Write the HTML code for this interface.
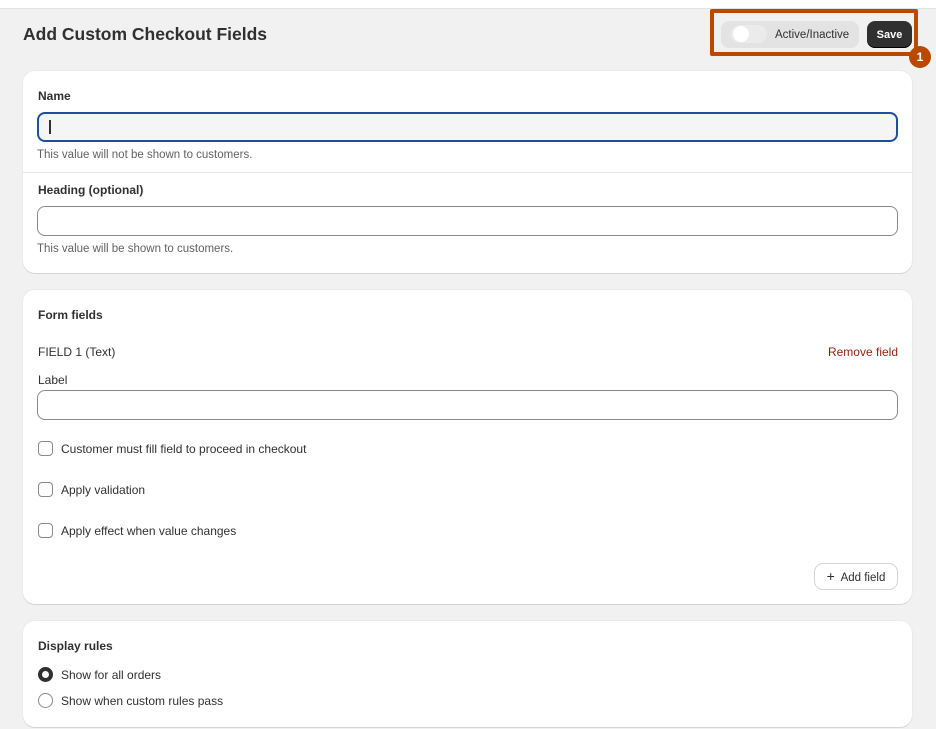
<!DOCTYPE html>
<html><head><meta charset="utf-8"><style>
*{box-sizing:border-box;margin:0;padding:0}
body{width:936px;height:729px;background:#f1f1f1;font-family:"Liberation Sans",sans-serif;color:#303030;position:relative;overflow:hidden;font-size:12px}
.a{position:absolute}
.top{left:0;top:0;width:936px;height:9px;background:#fff;border-bottom:1px solid #e3e3e3}
.card{position:absolute;left:23px;width:889px;background:#fff;border-radius:12px;box-shadow:0 1px 0 #d4d4d4,0 0 0 1px #ebebeb}
.b{font-weight:bold;font-size:12px}
.in{position:absolute;left:14px;width:861px;height:30px;border:1px solid #8a8a8a;border-radius:8px;background:#fff}
.help{position:absolute;left:14px;font-size:11.5px;color:#616161}
.cb{position:absolute;left:15px;width:15px;height:15px;border:1px solid #8a8a8a;border-radius:4px}
.lbl{position:absolute;left:38px;font-size:12px}
</style></head><body>
<div class="a top"></div>
<div class="a" style="left:23px;top:24px;font-size:17.5px;font-weight:bold;color:#303030">Add Custom Checkout Fields</div>
<div class="a" style="left:710px;top:9px;width:208px;height:47px;border:4px solid #b84a00;border-radius:2px"></div>
<div class="a" style="left:721px;top:21px;width:138px;height:27px;background:#e3e3e3;border-radius:8px"></div>
<div class="a" style="left:731px;top:25px;width:36px;height:18px;background:#ebebeb;border-radius:9px"></div>
<div class="a" style="left:733px;top:26px;width:16px;height:16px;background:#fff;border-radius:50%"></div>
<div class="a" style="left:775px;top:29px;font-size:11.5px;color:#303030">Active/Inactive</div>
<div class="a" style="left:867px;top:21px;width:45px;height:27px;background:#303030;border-radius:8px;color:#fff;font-weight:bold;font-size:11px;text-align:center;line-height:28px;box-shadow:inset 0 -1px 0 #000">Save</div>
<div class="a" style="left:909px;top:46px;width:22px;height:22px;border-radius:50%;background:#b84a00;color:#fff;font-weight:bold;font-size:12px;text-align:center;line-height:22px">1</div>

<div class="card" style="top:71px;height:202px">
<div class="a b" style="left:15px;top:18px">Name</div>
<div class="in" style="top:41px;border:2px solid #1d4fa0;background:#f5f5f5"><div class="a" style="left:10px;top:6px;width:2px;height:14px;background:#303030"></div></div>
<div class="help" style="top:78px">This value will not be shown to customers.</div>
<div class="a" style="left:0;top:101px;width:889px;height:1px;background:#e3e3e3"></div>
<div class="a b" style="left:15px;top:112px">Heading (optional)</div>
<div class="in" style="top:135px"></div>
<div class="help" style="top:172px">This value will be shown to customers.</div>
</div>

<div class="card" style="top:290px;height:314px">
<div class="a b" style="left:15px;top:18px">Form fields</div>
<div class="a" style="left:15px;top:55px;font-size:12px">FIELD 1 (Text)</div>
<div class="a" style="right:14px;top:55px;font-size:12px;color:#8e1f0b">Remove field</div>
<div class="a" style="left:15px;top:83px;font-size:12px">Label</div>
<div class="in" style="top:100px"></div>
<div class="cb" style="top:151px"></div><div class="lbl" style="top:152px">Customer must fill field to proceed in checkout</div>
<div class="cb" style="top:192px"></div><div class="lbl" style="top:193px">Apply validation</div>
<div class="cb" style="top:233px"></div><div class="lbl" style="top:234px">Apply effect when value changes</div>
<div class="a" style="left:792px;top:274px;width:82px;height:25px;border-radius:8px;background:#fff;box-shadow:0 0 0 1px #d4d4d4,0 1px 0 #ccc;font-size:11.5px;line-height:25px;text-align:center"><span style="font-size:14px">+</span>&nbsp; Add field</div>
</div>

<div class="card" style="top:621px;height:106px">
<div class="a b" style="left:15px;top:18px">Display rules</div>
<div class="a" style="left:15px;top:46px;width:15px;height:15px;border-radius:50%;border:4.5px solid #303030"></div>
<div class="lbl" style="top:47px">Show for all orders</div>
<div class="a" style="left:15px;top:72px;width:15px;height:15px;border-radius:50%;border:1px solid #8a8a8a"></div>
<div class="lbl" style="top:73px">Show when custom rules pass</div>
</div>
</body></html>
